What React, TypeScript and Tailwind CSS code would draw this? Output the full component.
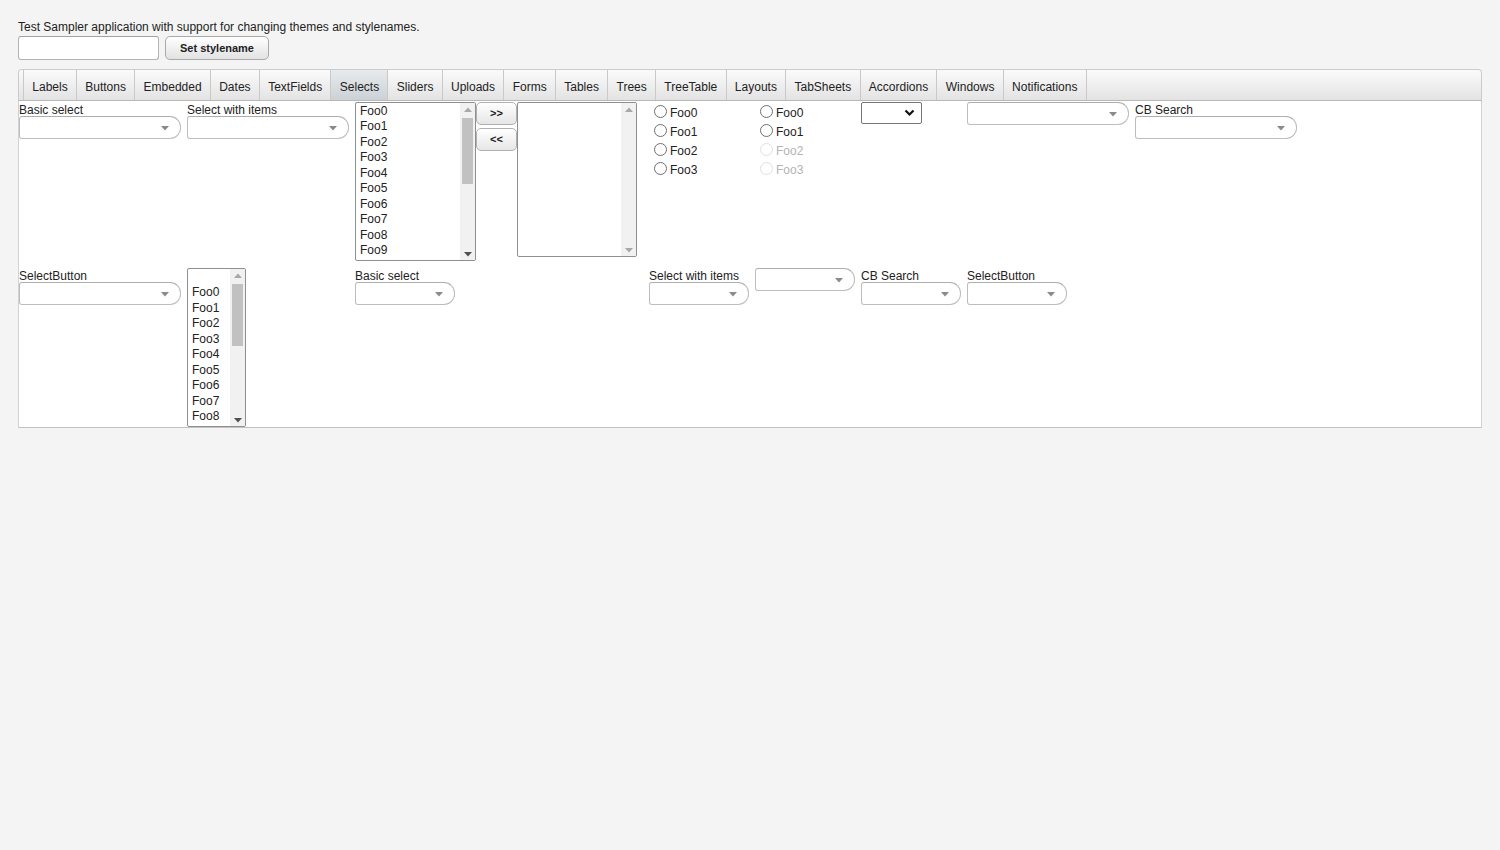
import React from 'react';

const TABS = [
  'Labels',
  'Buttons',
  'Embedded',
  'Dates',
  'TextFields',
  'Selects',
  'Sliders',
  'Uploads',
  'Forms',
  'Tables',
  'Trees',
  'TreeTable',
  'Layouts',
  'TabSheets',
  'Accordions',
  'Windows',
  'Notifications',
];

const FOOS = ['Foo0', 'Foo1', 'Foo2', 'Foo3', 'Foo4', 'Foo5', 'Foo6', 'Foo7', 'Foo8', 'Foo9'];

function Combo({ width }: { width: string }) {
  return (
    <div
      className={`${width} relative h-[23px] rounded-l-[3px] rounded-r-[11px] border border-[#bdbdbd] border-t-[#aeaeae] bg-white`}
    >
      <svg className="absolute right-[11px] top-[9px]" width="8" height="5" viewBox="0 0 8 5">
        <path d="M0 0 L8 0 L4 4.5 Z" fill="#8a8a8a" />
      </svg>
    </div>
  );
}

function Captioned({ caption, width, slot }: { caption: string; width: string; slot: string }) {
  return (
    <div className={`${slot} shrink-0`}>
      <div className="h-[14px] text-[12px] leading-[16px]">{caption}</div>
      <Combo width={width} />
    </div>
  );
}

function Arrow({ up, active }: { up?: boolean; active: boolean }) {
  return (
    <div className="flex h-[12px] items-center justify-center">
      <svg width="8" height="5" viewBox="0 0 8 5">
        <path d={up ? 'M0 5 L8 5 L4 0.5 Z' : 'M0 0 L8 0 L4 4.5 Z'} fill={active ? '#505050' : '#a8a8a8'} />
      </svg>
    </div>
  );
}

function ListBox({
  items,
  box,
  thumb,
  pad,
}: {
  items: string[];
  box: string;
  thumb: string | null;
  pad: string;
}) {
  return (
    <div className={`${box} flex shrink-0 overflow-hidden rounded-[2px] border border-[#8f8f8f] bg-white`}>
      <div className={`flex-1 overflow-hidden pl-[4px] text-[12px] leading-[15.45px] ${pad}`}>
        {items.map((it, i) => (
          <div key={i} className="h-[15.45px] whitespace-nowrap">
            {it === '' ? '\u00a0' : it}
          </div>
        ))}
      </div>
      <div className="flex w-[15px] flex-col bg-[#f1f1f1]">
        <Arrow up active={false} />
        <div className="flex-1 px-[2px]">
          {thumb ? <div className={`${thumb} bg-[#c1c1c1]`} /> : null}
        </div>
        <Arrow active={thumb !== null} />
      </div>
    </div>
  );
}

function Radio({ label, disabled }: { label: string; disabled?: boolean }) {
  return (
    <div className="flex h-[19px] items-center gap-[3px]">
      <div
        className={`mb-[3px] h-[13px] w-[13px] rounded-full border bg-white ${
          disabled ? 'border-[#e0e0e0]' : 'border-[#6f6f6f]'
        }`}
      />
      <span className={`text-[12px] ${disabled ? 'text-[#b4b4b4]' : ''}`}>{label}</span>
    </div>
  );
}

function SmallButton({ label }: { label: string }) {
  return (
    <div className="flex h-[23px] w-[41px] items-center justify-center rounded-[5px] border border-[#b0b0b0] bg-linear-to-b from-[#ffffff] to-[#e6e6e6] text-[11px] font-bold">
      {label}
    </div>
  );
}

export default function App() {
  return (
    <div className="min-h-[850px] bg-[#f4f4f4] font-['Liberation_Sans',Arial,sans-serif] text-[#222]">
      <div className="px-[18px] pt-[20px]">
        <div className="h-[16px] text-[12px] leading-[14px]">
          Test Sampler application with support for changing themes and stylenames.
        </div>
        <div className="flex gap-[6px]">
          <div className="h-[24px] w-[141px] rounded-[3px] border border-[#b3b3b3] border-t-[#a2a2a2] bg-white" />
          <div className="flex h-[24px] w-[104px] items-center justify-center rounded-[5px] border border-[#a9a9a9] bg-linear-to-b from-[#ffffff] to-[#e2e2e2] text-[11px] font-bold">
            Set stylename
          </div>
        </div>
      </div>

      <div className="mx-[18px] mt-[9px]">
        <div className="flex h-[32px] rounded-t-[4px] border border-[#cbcbcb] border-b-[#b8b8b8] bg-linear-to-b from-[#fbfbfb] to-[#e3e3e3]">
          <div className="w-[5px] border-r border-[#c9c9c9]" />
          {TABS.map((t) => (
            <div
              key={t}
              className={`flex items-center border-r border-[#c9c9c9] px-[8.3px] pt-[3px] text-[12px] ${
                t === 'Selects' ? 'bg-linear-to-b from-[#e8ebed] to-[#cbd1d5]' : ''
              }`}
            >
              {t}
            </div>
          ))}
        </div>

        <div className="border-x border-b border-[#d2d2d2] border-b-[#c2c2c2] bg-white pt-[1px]">
          <div className="flex items-start gap-[6px]">
            <Captioned caption="Basic select" width="w-[162px]" slot="w-[162px]" />
            <Captioned caption="Select with items" width="w-[162px]" slot="w-[162px]" />
            <div className="flex w-[288px] shrink-0 items-start">
              <ListBox items={FOOS} box="w-[121px] h-[159px]" thumb="mt-[3px] h-[66px]" pad="pt-[1px]" />
              <div className="flex flex-col gap-[3px]">
                <SmallButton label=">>" />
                <SmallButton label="<<" />
              </div>
              <ListBox items={[]} box="w-[120px] h-[155px]" thumb={null} pad="" />
            </div>
            <div className="w-[100px] shrink-0 pl-[5px] pt-[1px]">
              <Radio label="Foo0" />
              <Radio label="Foo1" />
              <Radio label="Foo2" />
              <Radio label="Foo3" />
            </div>
            <div className="w-[100px] shrink-0 pl-[5px] pt-[1px]">
              <Radio label="Foo0" />
              <Radio label="Foo1" />
              <Radio label="Foo2" disabled />
              <Radio label="Foo3" disabled />
            </div>
            <div className="w-[100px] shrink-0">
              <div className="relative h-[22px] w-[61px] rounded-[2px] border border-[#767676] bg-white">
                <svg className="absolute right-[6px] top-[6px]" width="11" height="8" viewBox="0 0 11 8">
                  <path d="M1.5 1.5 L5.5 5.5 L9.5 1.5" fill="none" stroke="#111" strokeWidth="2.2" />
                </svg>
              </div>
            </div>
            <Combo width="w-[162px] shrink-0" />
            <Captioned caption="CB Search" width="w-[162px]" slot="w-[162px]" />
          </div>

          <div className="mt-[7px] flex items-start gap-[6px]">
            <Captioned caption="SelectButton" width="w-[162px]" slot="w-[162px]" />
            <div className="w-[162px] shrink-0">
              <ListBox
                items={['', ...FOOS.slice(0, 9)]}
                box="w-[59px] h-[159px]"
                thumb="mt-[3px] h-[62px]"
                pad="pt-[1px]"
              />
            </div>
            <Captioned caption="Basic select" width="w-[100px]" slot="w-[288px]" />
            <Captioned caption="Select with items" width="w-[100px]" slot="w-[100px]" />
            <div className="w-[100px] shrink-0">
              <Combo width="w-[100px]" />
            </div>
            <Captioned caption="CB Search" width="w-[100px]" slot="w-[100px]" />
            <Captioned caption="SelectButton" width="w-[100px]" slot="w-[100px]" />
          </div>
        </div>
      </div>
    </div>
  );
}
